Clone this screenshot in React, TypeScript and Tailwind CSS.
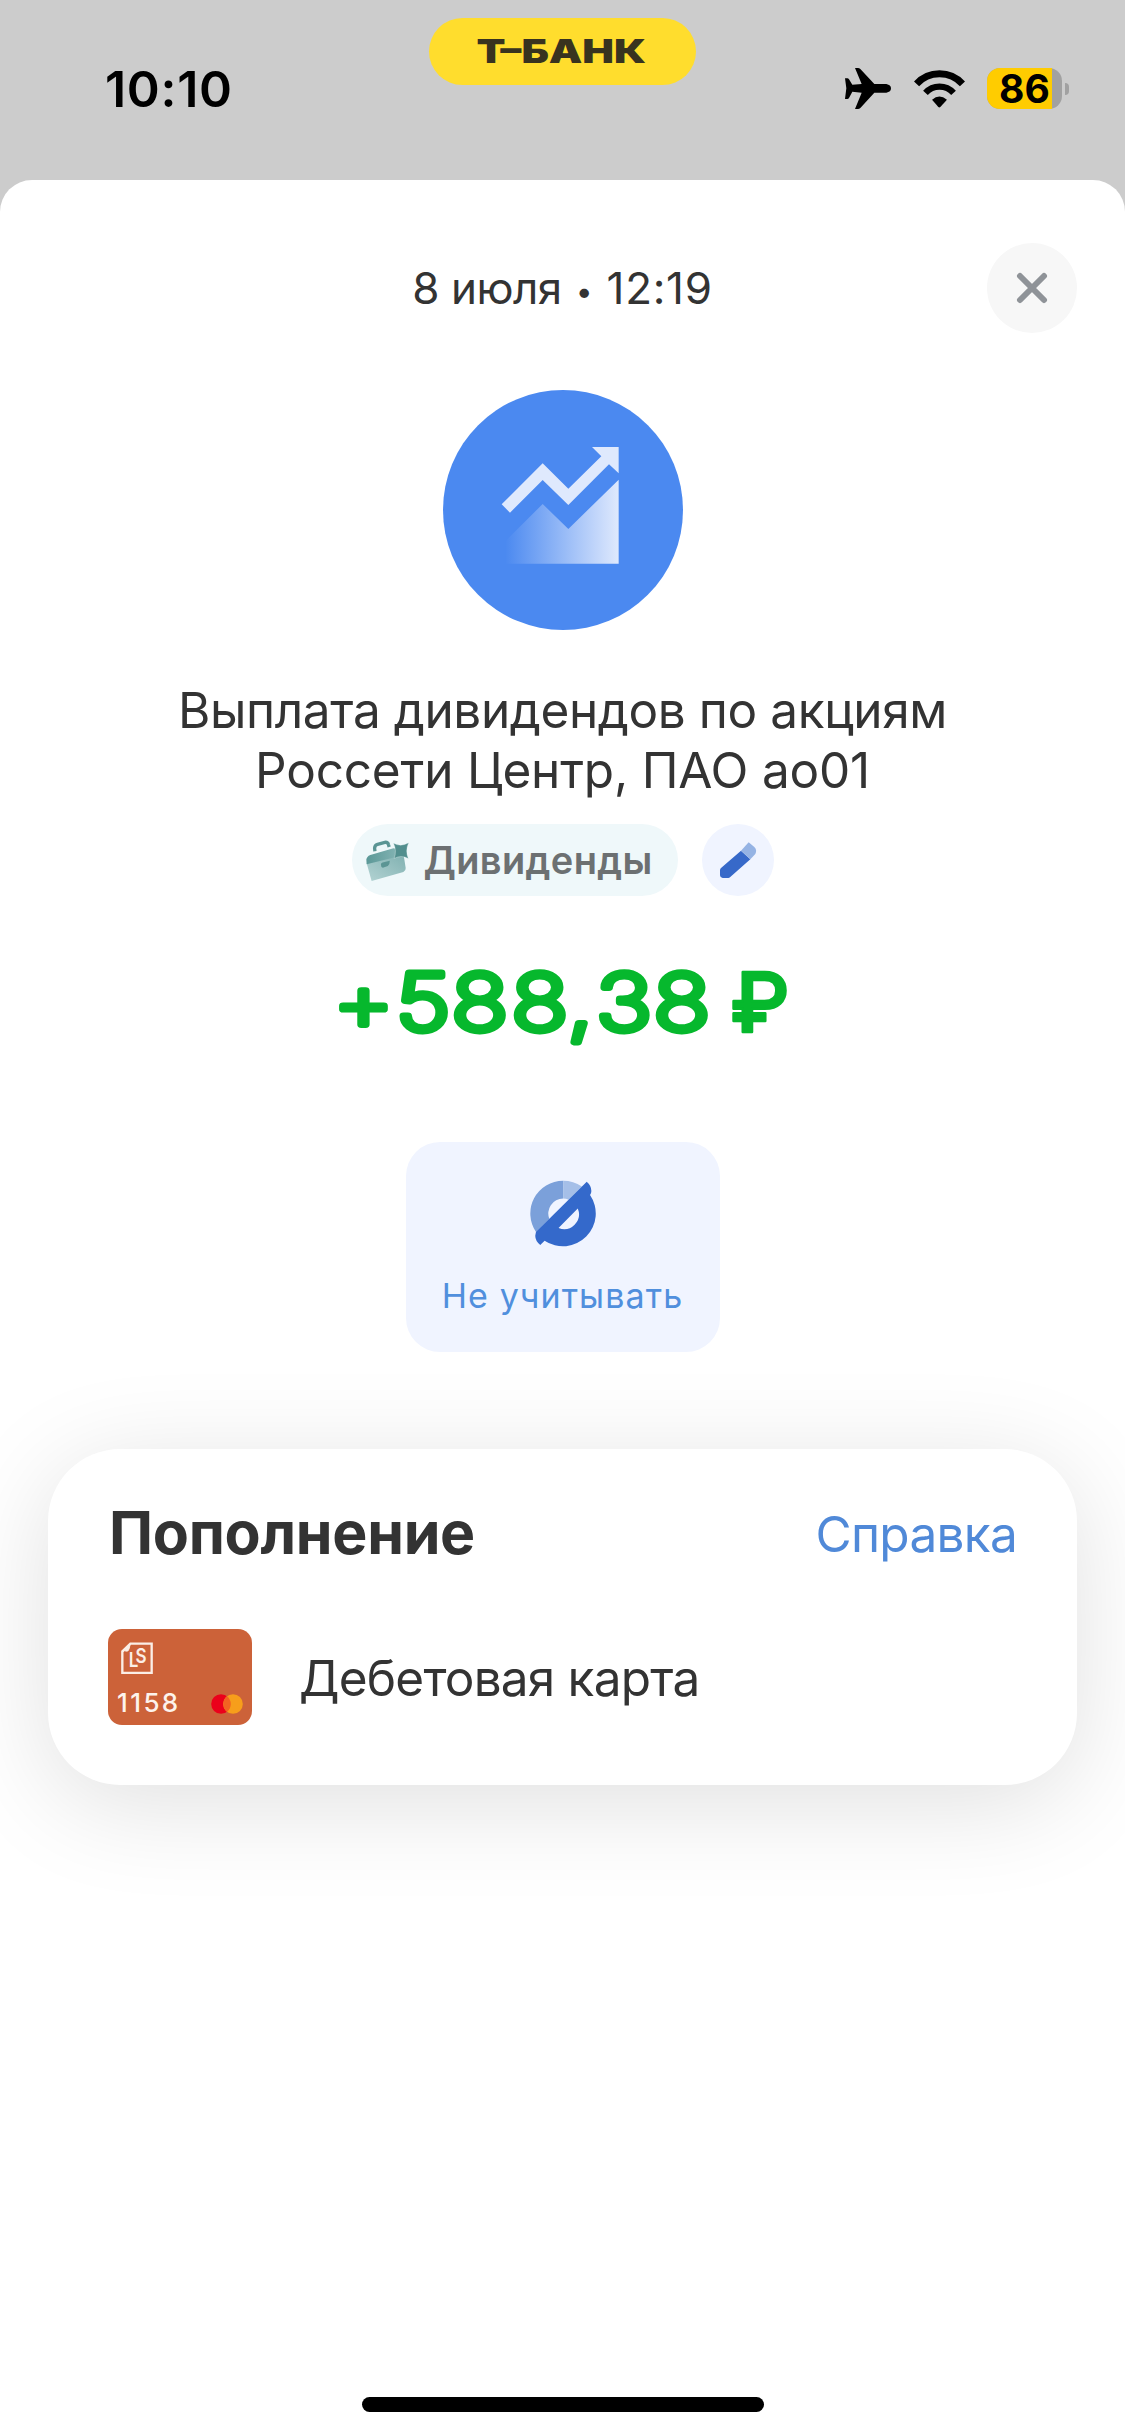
function PlaneIcon() {
  return (
    <svg className="h-[41px] w-[46px]" viewBox="75 87 138 123" aria-hidden="true">
      <path
        fill="#000"
        d="M75 118H82Q85 118 87 121L97 137L125 135L105 87H114Q118 87 121 90L163 135H199Q213 138 213 148Q213 159 199 161H163L121 207Q118 210 114 210H105L125 161L97 158L87 177Q85 180 82 180H75L79 148Z"
      />
    </svg>
  );
}

function WifiIcon() {
  return (
    <svg className="h-[38px] w-[51px]" viewBox="282 88 153 115" aria-hidden="true">
      <path d="M289 130A94 94 0 0 1 428 130" fill="none" stroke="#000" strokeWidth="21" />
      <path d="M316 157A57 57 0 0 1 401 157" fill="none" stroke="#000" strokeWidth="19" />
      <path d="M336 178Q358 158 381 178L361 200Q358 203 355 200Z" fill="#000" />
    </svg>
  );
}

function Battery() {
  return (
    <div className="flex items-center gap-[3px]">
      <div className="flex h-[41px] w-[75px] items-center rounded-[13px] bg-[#a1a1a1]">
        <div className="flex h-full w-[65px] items-center rounded-l-[13px] bg-[#ffcc00] pl-3 text-[39px] leading-[47px] font-bold text-black">
          86
        </div>
      </div>
      <div className="h-3 w-1 rounded-r-full bg-[#a1a1a1]" />
    </div>
  );
}

function StatusBar() {
  return (
    <header className="relative h-[180px] shrink-0">
      <div className="flex h-[177px] items-center justify-between pr-14 pl-[105px]">
        <span className="text-[50px] leading-[60px] font-semibold tracking-[0.7px] text-black">10:10</span>
        <div className="flex items-center gap-[22.5px]">
          <PlaneIcon />
          <WifiIcon />
          <Battery />
        </div>
      </div>
      <div className="absolute top-[18px] left-[429px] flex h-[67px] w-[267px] items-center justify-center rounded-full bg-[#ffdd2d] pr-[3px]">
        <span className="origin-center scale-x-[1.28] text-[33px] leading-[67px] font-black whitespace-nowrap text-[#38331f]">
          <span className="tracking-[-4px]">Т</span>–БАНК
        </span>
      </div>
    </header>
  );
}

function ChartIcon() {
  return (
    <svg className="size-[240px]" viewBox="39 30 720 720" aria-hidden="true">
      <defs>
        <linearGradient id="area" gradientUnits="userSpaceOnUse" x1="226" y1="0" x2="566" y2="0">
          <stop offset="0" stopColor="#dfe9fd" stopOpacity="0" />
          <stop offset="1" stopColor="#dfe9fd" />
        </linearGradient>
      </defs>
      <circle cx="399" cy="390" r="360" fill="#4b89f0" />
      <path d="M215 373L338 250L415 326L514 229L486 201H566V280L537 253L415 375L338 300L240 398Z" fill="#dfe9fd" />
      <path d="M215 494L338 372L415 447L566 299V551H215Z" fill="url(#area)" />
    </svg>
  );
}

function BriefcaseIcon() {
  return (
    <svg className="h-[43px] w-[47px]" viewBox="72 84 140 130" aria-hidden="true">
      <defs>
        <linearGradient id="case" x1="0" y1="1" x2="1" y2="0">
          <stop offset="0" stopColor="#b3d3d3" />
          <stop offset="1" stopColor="#7fb0b0" />
        </linearGradient>
        <linearGradient id="lid" x1="0" y1="0" x2="1" y2="0">
          <stop offset="0" stopColor="#5b9897" />
          <stop offset="1" stopColor="#8bb9b9" />
        </linearGradient>
      </defs>
      <path d="M104 121L103 112Q103 103 112 100L134 94Q143 93 145 101L147 108" fill="none" stroke="#5b9594" strokeWidth="10" />
      <path d="M79 157L190 128L197 172Q198 180 190 184L94 211Z" fill="url(#case)" />
      <path d="M79 160L78 147Q79 136 90 132L160 112L192 118L193 132Z" fill="url(#lid)" />
      <path d="M122 161Q122 156 127 155L149 150Q149 162 143 166L128 171Q122 170 122 161Z" fill="#5b9594" />
      <path d="M160 97Q183 109 206 95Q195 119 205 143Q183 131 162 143Q171 119 160 97Z" fill="#528f8e" stroke="#eff8fa" strokeWidth="1" />
    </svg>
  );
}

function PencilIcon() {
  return (
    <svg className="size-[72px]" viewBox="1086 42 216 216" aria-hidden="true">
      <path d="M1203 122L1231 148L1170 202Q1168 204 1165 204H1148Q1140 203 1140 196V181Q1140 177 1143 174Z" fill="#3769c9" />
      <path d="M1203 122L1226 97L1243 111Q1252 120 1246 132L1231 148Z" fill="#95b3e4" />
    </svg>
  );
}

function ExcludeIcon() {
  return (
    <svg className="ml-px size-[73px]" viewBox="410 142 220 220" aria-hidden="true">
      <path d="M519 153A99 99 0 0 0 437.6 308.4L477.3 268.7A45 45 0 0 1 519 207Z" fill="#7ba0da" />
      <path d="M519 153A99 99 0 0 1 575.4 170.6L535.7 210.3A45 45 0 0 0 519 207Z" fill="#a5bfe8" />
      <path
        fillRule="evenodd"
        fill="#3469cb"
        d="M437 308L590 156Q604 168 604 184Q604 191 600 196A99 99 0 0 1 463 334L450 347Q434 334 435 318ZM563 237A45 45 0 0 1 505 296Z"
      />
    </svg>
  );
}

function Amount() {
  return (
    <svg
      className="mt-[54px] h-[110px] w-[480px] shrink-0 overflow-visible"
      viewBox="322.5 950 480 110"
      fill="#06b82d"
      stroke="#06b82d"
      strokeLinejoin="round"
      strokeLinecap="round"
      role="img"
      aria-label="+588,38 ₽"
    >
      <text
        className="text-[78px] font-extralight"
        transform="scale(1.2 1)"
        x="302.5 352.2 399.3 449.4 483.3 519.6 567.8"
        y="1030"
        textAnchor="middle"
        strokeWidth="6.9"
      >
        +588,38
      </text>
      <text className="text-[83px] font-medium" x="759.5" y="1032" textAnchor="middle" strokeWidth="2.5">
        ₽
      </text>
    </svg>
  );
}

function BankCard() {
  return (
    <div className="flex h-24 w-36 flex-col justify-between rounded-[14px] bg-[#cc6239] px-[9px] pt-[13px] pb-[9px]">
      <svg className="ml-[3px] h-[32px] w-[34px]" viewBox="90 94 102 96" aria-hidden="true">
        <path d="M97 122L121 99H185V187H97Z" fill="none" stroke="#fbeee6" strokeWidth="7" />
        <path d="M97 124L121 99L117 115Q114 124 108 121Q104 118 97 124Z" fill="#fbeee6" stroke="#fbeee6" strokeWidth="3" />
        <text transform="scale(0.85 1)" x="137 161" y="170 156" fill="#fbeee6" fontSize="60" fontWeight="600">
          LS
        </text>
      </svg>
      <div className="flex items-center justify-between">
        <span className="text-[26px] leading-[27px] font-medium tracking-[2.4px] text-[#fdf3ec]">1158</span>
        <svg className="mt-[3px] h-5 w-8" viewBox="0 0 32 20" aria-hidden="true">
          <circle cx="10" cy="10" r="9.8" fill="#eb001b" />
          <circle cx="22" cy="10" r="9.8" fill="#f79e1b" />
          <path d="M16 2.25A9.8 9.8 0 0 1 16 17.75A9.8 9.8 0 0 1 16 2.25Z" fill="#f26322" />
        </svg>
      </div>
    </div>
  );
}

export default function App() {
  return (
    <div className="flex h-[2436px] w-[1125px] flex-col overflow-hidden bg-[#cccccc] font-['Inter',sans-serif] text-[#333333]">
      <StatusBar />
      <main className="flex flex-1 flex-col items-center rounded-t-[32px] bg-white px-12 pt-[63px]">
        <div className="grid w-full grid-cols-[90px_1fr_90px] items-center">
          <span />
          <time className="flex items-center justify-center gap-[14px] text-[44px] leading-[60px]">
            <span className="tracking-[-0.5px]">8 июля</span>
            <span className="pt-[5px] text-[30px]">•</span>
            <span className="tracking-[0.7px]">12:19</span>
          </time>
          <button aria-label="Закрыть" className="flex size-[90px] items-center justify-center rounded-full bg-[#f7f7f7]">
            <svg className="size-8" viewBox="0 0 32 32" aria-hidden="true">
              <path d="M4 4L28 28M28 4L4 28" stroke="#8f9398" strokeWidth="6" strokeLinecap="round" />
            </svg>
          </button>
        </div>

        <div className="mt-[57px]">
          <ChartIcon />
        </div>

        <h1 className="mt-[50px] text-center text-[49.5px] leading-[60px] font-normal whitespace-nowrap">
          <span className="block tracking-[-0.4px]">Выплата дивидендов по акциям</span>
          <span className="block tracking-[-0.2px]">Россети Центр, ПАО ао01</span>
        </h1>

        <div className="mt-6 flex gap-6">
          <div className="flex h-[72px] w-[326px] items-center gap-[13px] rounded-full bg-[#eff8fa] pl-3">
            <BriefcaseIcon />
            <span className="text-[38px] leading-[72px] font-semibold tracking-[0.35px] text-[#6c7072]">Дивиденды</span>
          </div>
          <button aria-label="Изменить категорию" className="size-[72px] rounded-full bg-[#f0f4ff]">
            <PencilIcon />
          </button>
        </div>

        <Amount />

        <button className="mt-[82px] flex h-[210px] w-[314px] flex-col items-center gap-[26px] rounded-[34px] bg-[#f0f4ff] pt-[35px]">
          <ExcludeIcon />
          <span className="text-[34px] leading-10 tracking-[1.1px] whitespace-nowrap text-[#508fdd]">Не учитывать</span>
        </button>

        <section className="mt-[97px] h-[336px] w-full rounded-[72px] bg-white pt-[54px] pr-[60px] pl-[60px] shadow-[0_18px_102px_rgba(0,0,0,0.125)]">
          <div className="flex items-center justify-between pl-px">
            <h2 className="text-[59px] leading-[60px] font-bold tracking-[-0.28px]">Пополнение</h2>
            <a className="pt-[2px] text-[49.5px] leading-[58px] tracking-[-0.7px] text-[#5089d8]">Справка</a>
          </div>
          <div className="mt-[66px] flex items-center gap-[47px]">
            <BankCard />
            <span className="pt-[2px] text-[49.5px] leading-[60px] tracking-[-0.8px]">Дебетовая карта</span>
          </div>
        </section>

        <div className="mt-auto mb-6 h-[15px] w-[402px] rounded-full bg-black" />
      </main>
    </div>
  );
}
